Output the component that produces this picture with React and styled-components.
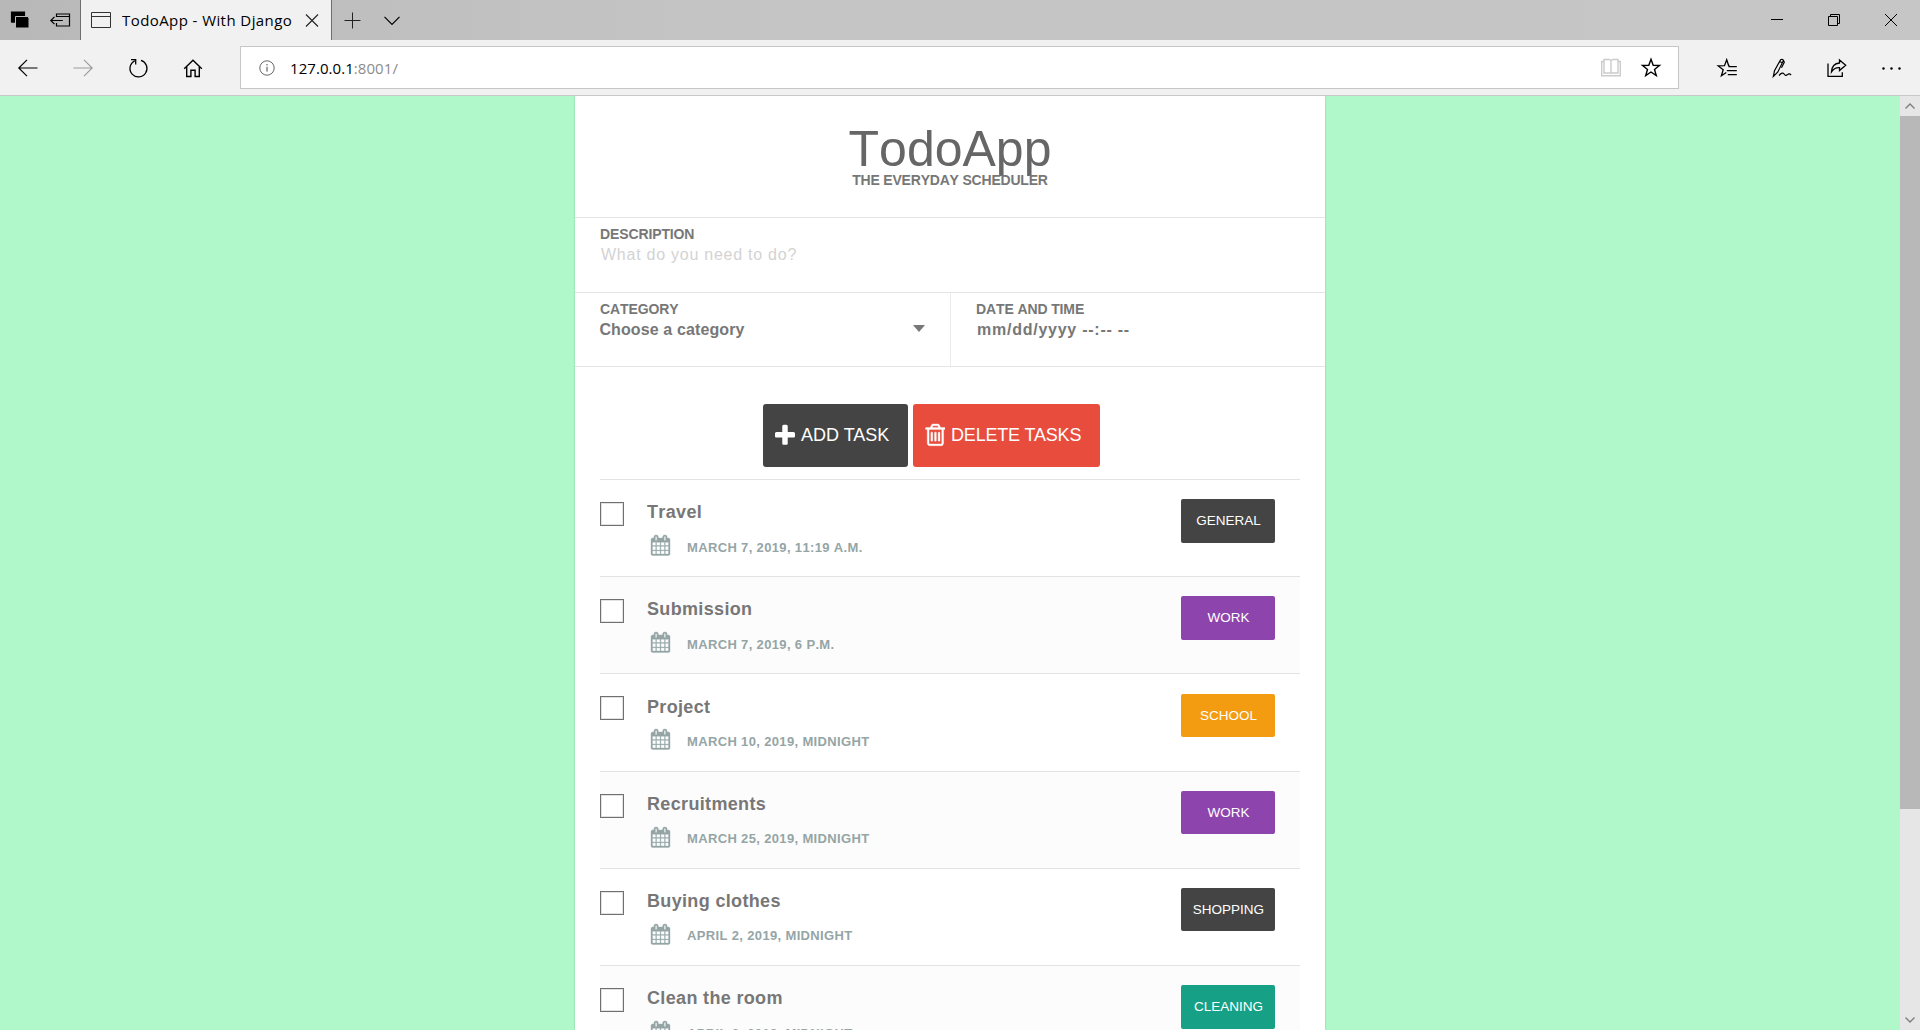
import React from 'react';
import styled, { createGlobalStyle } from 'styled-components';

const Global = createGlobalStyle`
  * { box-sizing: border-box; }
  body {
    margin: 0;
    overflow: hidden;
    font-family: 'Liberation Sans', Arial, sans-serif;
    font-kerning: none;
  }
  h1, h2, p, ul { margin: 0; padding: 0; }
`;

const Window = styled.div`
  width: 1920px;
  height: 1030px;
  display: flex;
  flex-direction: column;
  overflow: hidden;
  background: #f1f1f1;
  font-family: 'Liberation Sans', Arial, sans-serif;
`;

/* Browser chrome */
const TitleBar = styled.div`
  height: 40px;
  flex: none;
  display: flex;
  padding-right: 1px;
  background: linear-gradient(90deg, #b8b8b8 0, #c0c0c0 420px, #c5c5c5 800px, #c6c6c6 100%);
`;
const Cell = styled.div`
  width: ${(p) => p.$w}px;
  flex: none;
  display: flex;
  align-items: center;
  justify-content: center;
  color: ${(p) => p.$color || '#000'};
  svg { display: block; overflow: visible; }
`;
const Tab = styled.div`
  width: 252px;
  display: flex;
  align-items: center;
  background: #f1f1f1;
  border-left: 1px solid #6e6e6e;
  border-right: 1px solid #6e6e6e;
  padding-left: 10px;
  svg { display: block; flex: none; }
`;
const TabTitle = styled.div`
  width: 170px;
  margin: 0 13px 0 11px;
  overflow: hidden;
  white-space: nowrap;
  font: 15px/22px 'Open Sans', 'Noto Sans', sans-serif;
  letter-spacing: 0.42px;
  color: #000;
`;
const Spacer = styled.div`
  flex: 1;
`;
const Toolbar = styled.div`
  height: 56px;
  flex: none;
  display: flex;
  align-items: stretch;
  border-bottom: 1px solid #c8c8c8;
`;
const Address = styled.div`
  width: 1439px;
  height: 43px;
  margin: 6px 21px 0 20px;
  display: flex;
  align-items: center;
  background: #fff;
  border: 1px solid #c6c6c6;
  padding-left: 17.5px;
  svg { display: block; overflow: visible; }
`;
const Url = styled.div`
  flex: 1;
  margin-left: 15.5px;
  font: 15px/22px 'Open Sans', 'Noto Sans', sans-serif;
  letter-spacing: 0.06px;
  color: #000;
  span { color: #8c8c8c; }
`;

/* Page */
const Viewport = styled.div`
  flex: 1;
  min-height: 0;
  display: flex;
  background: #b0f7ca;
`;
const Page = styled.div`
  flex: 1;
  display: flex;
  justify-content: center;
  overflow: hidden;
`;
const Sheet = styled.main`
  width: 750px;
  height: 1300px;
  background: #fff;
  box-shadow: 0 0 2px rgba(0, 0, 0, 0.2);
`;
const Header = styled.header`
  height: 121px;
  padding-top: 28px;
  text-align: center;
  h1 {
    font-size: 50px;
    line-height: 50px;
    font-weight: 400;
    color: #666;
  }
  p {
    font-size: 14px;
    line-height: 12px;
    font-weight: 700;
    color: #777;
    letter-spacing: -0.2px;
  }
`;
const FormRow = styled.div`
  height: ${(p) => p.$h}px;
  display: grid;
  grid-auto-flow: column;
  grid-auto-columns: minmax(0, 1fr);
  border-top: 1px solid #e5e5e5;
`;
const Field = styled.label`
  display: flex;
  flex-direction: column;
  padding: 8px 25px 0;
  & + & { border-left: 1px solid #ececec; }
`;
const Label = styled.span`
  font-size: 14px;
  line-height: 16px;
  font-weight: 700;
  letter-spacing: -0.12px;
  color: #777;
`;
const Value = styled.span`
  display: flex;
  justify-content: space-between;
  font-size: 16px;
  line-height: 26px;
  font-weight: ${(p) => (p.$hint ? 400 : 700)};
  letter-spacing: ${(p) => (p.$wide ? 0.75 : 0.12)}px;
  padding-left: ${(p) => (p.$wide ? 1 : 0)}px;
  margin-left: ${(p) => (p.$wide ? 0 : -0.6)}px;
  color: ${(p) => (p.$hint ? '#d3d3d3' : '#777')};
`;
const Caret = styled.i`
  width: 0;
  height: 0;
  margin: 8px 0 0;
  border: 6px solid transparent;
  border-top: 7px solid #777;
  border-bottom: 0;
`;
const Actions = styled.div`
  height: 113px;
  border-top: 1px solid #e5e5e5;
  padding: 37px 0 0 188px;
  display: flex;
  gap: 5px;
`;
const Action = styled.button`
  width: ${(p) => p.$w}px;
  height: 63px;
  display: flex;
  align-items: center;
  gap: 6px;
  padding: 0 0 2px 12px;
  border: 0;
  border-radius: 3px;
  background: ${(p) => p.$bg};
  color: #fff;
  font: 18px/20px 'Liberation Sans', Arial, sans-serif;
  letter-spacing: ${(p) => p.$track || 0}px;
  white-space: nowrap;
  svg { flex: none; display: block; }
`;
const List = styled.ul`
  list-style: none;
  margin: 0 25px;
`;
const Item = styled.li`
  height: 97.2px;
  border-top: 1px solid #e3e3e3;
  display: flex;
  background: #fff;
  &:nth-child(even) { background: #fcfcfc; }
`;
const Check = styled.span`
  width: 24px;
  height: 24px;
  margin-top: 22px;
  border: 1px solid #707070;
  background: #fff;
  box-shadow: inset 0 0 0 1px #e2e2e2;
`;
const Info = styled.div`
  flex: 1;
  margin-left: 23px;
  padding-top: 22.2px;
`;
const Name = styled.h2`
  font-size: 18px;
  line-height: 20px;
  font-weight: 700;
  letter-spacing: 0.34px;
  color: #777;
`;
const When = styled.div`
  display: flex;
  align-items: center;
  margin: 11px 0 0 4px;
  height: 24px;
  color: #95a5a6;
  font-size: 13px;
  font-weight: 700;
  letter-spacing: 0.35px;
  svg { display: block; margin-right: 17px; overflow: visible; }
  span { padding-top: 4px; }
`;
const Badge = styled.div`
  width: 94px;
  height: 43.5px;
  margin: 19.2px 25px 0 0;
  padding-left: 1px;
  border-radius: 2px;
  background: ${(p) => p.$bg};
  color: #fff;
  font-size: 13.5px;
  line-height: 43px;
  text-align: center;
`;

/* Scrollbar */
const Scrollbar = styled.div`
  width: 20px;
  display: flex;
  flex-direction: column;
  background: #e6e6e6;
`;
const ScrollButton = styled.div`
  height: 20px;
  display: flex;
  align-items: center;
  justify-content: center;
  color: #7c7c7c;
`;
const Thumb = styled.div`
  height: 693px;
  background: #b8b8b8;
`;

const Icon = ({ w = 20, h = 20, sw = 1.2, children }) => (
  <svg width={w} height={h} viewBox={`0 0 ${w} ${h}`} fill="none" stroke="currentColor" strokeWidth={sw}>
    {children}
  </svg>
);

const CalendarIcon = () => (
  <svg width="19" height="20.5" viewBox="0 0 1664 1792" fill="currentColor" stroke="currentColor" strokeWidth="30">
    <path d="M128 1664h288v-288h-288v288zm352 0h320v-288h-320v288zm-352-352h288v-320h-288v320zm352 0h320v-320h-320v320zm-352-384h288v-288h-288v288zm736 736h320v-288h-320v288zm-384-736h320v-288h-320v288zm768 736h288v-288h-288v288zm-384-352h320v-320h-320v320zm-352-864v-288q0-13-9.5-22.5t-22.5-9.5h-64q-13 0-22.5 9.5t-9.5 22.5v288q0 13 9.5 22.5t22.5 9.5h64q13 0 22.5-9.5t9.5-22.5zm736 864h288v-320h-288v320zm-384-384h320v-288h-320v288zm384 0h288v-288h-288v288zm32-480v-288q0-13-9.5-22.5t-22.5-9.5h-64q-13 0-22.5 9.5t-9.5 22.5v288q0 13 9.5 22.5t22.5 9.5h64q13 0 22.5-9.5t9.5-22.5zm384-64v1280q0 52-38 90t-90 38h-1408q-52 0-90-38t-38-90v-1280q0-52 38-90t90-38h128v-96q0-66 47-113t113-47h64q66 0 113 47t47 113v96h384v-96q0-66 47-113t113-47h64q66 0 113 47t47 113v96h128q52 0 90 38t38 90z" />
  </svg>
);

const PlusIcon = () => (
  <svg width="20" height="24" viewBox="192 0 1408 1690" fill="currentColor">
    <path d="M1600 736v192q0 40-28 68t-68 28h-416v416q0 40-28 68t-68 28h-192q-40 0-68-28t-28-68v-416h-416q-40 0-68-28t-28-68v-192q0-40 28-68t68-28h416v-416q0-40 28-68t68-28h192q40 0 68 28t28 68v416h416q40 0 68 28t28 68z" />
  </svg>
);

const TrashIcon = () => (
  <svg width="20" height="24" viewBox="162 60 1408 1690" fill="currentColor" stroke="currentColor" strokeWidth="24">
    <path d="M704 736v576q0 14-9 23t-23 9h-64q-14 0-23-9t-9-23v-576q0-14 9-23t23-9h64q14 0 23 9t9 23zm256 0v576q0 14-9 23t-23 9h-64q-14 0-23-9t-9-23v-576q0-14 9-23t23-9h64q14 0 23 9t9 23zm256 0v576q0 14-9 23t-23 9h-64q-14 0-23-9t-9-23v-576q0-14 9-23t23-9h64q14 0 23 9t9 23zm128 724v-948h-896v948q0 22 7 40.5t14.5 27 10.5 8.5h832q3 0 10.5-8.5t14.5-27 7-40.5zm-672-1076h448l-48-117q-7-9-17-11h-317q-10 2-17 11zm928 32v64q0 14-9 23t-23 9h-96v948q0 83-47 143.5t-113 60.5h-832q-66 0-113-58.5t-47-141.5v-952h-96q-14 0-23-9t-9-23v-64q0-14 9-23t23-9h309l70-167q15-37 54-63t79-26h320q40 0 79 26t54 63l70 167h309q14 0 23 9t9 23z" />
  </svg>
);

const tasks = [
  { name: 'Travel', when: 'MARCH 7, 2019, 11:19 A.M.', tag: 'GENERAL', color: '#444444' },
  { name: 'Submission', when: 'MARCH 7, 2019, 6 P.M.', tag: 'WORK', color: '#8e44ad' },
  { name: 'Project', when: 'MARCH 10, 2019, MIDNIGHT', tag: 'SCHOOL', color: '#f39c12' },
  { name: 'Recruitments', when: 'MARCH 25, 2019, MIDNIGHT', tag: 'WORK', color: '#8e44ad' },
  { name: 'Buying clothes', when: 'APRIL 2, 2019, MIDNIGHT', tag: 'SHOPPING', color: '#444444' },
  { name: 'Clean the room', when: 'APRIL 6, 2019, MIDNIGHT', tag: 'CLEANING', color: '#16a085' },
];

const Chrome = () => (
  <>
    <TitleBar>
      <Cell $w={40}>
        <Icon>
          <path d="M1.5 2h13v3.5h-8v7h-5z" fill="currentColor" stroke="none" />
          <path d="M1.5 2h13v10h-13z" fill="currentColor" />
          <path d="M5.5 6.5h13v11h-13z" fill="currentColor" stroke="#b9b9b9" strokeWidth="1" />
          <path d="M6 8h12.500v9.500h-12.500z" fill="currentColor" stroke="none" />
        </Icon>
      </Cell>
      <Cell $w={40}>
        <Icon>
          <path d="M6.500 7V4h13v12h-13v-3M6.500 6.500h13M.800 10.500h12M4.500 6.800L.800 10.500l3.700 3.700" />
        </Icon>
      </Cell>
      <Tab>
        <Icon w={20} h={18}>
          <path d="M.5 1.500h19v15H.5zM.5 5.500h19" stroke="#333" strokeWidth="1" />
        </Icon>
        <TabTitle>TodoApp - With Django</TabTitle>
        <Icon w={14} h={14}>
          <path d="M1 1.500l12 12M13 1.500L1 13.500" stroke="#222" strokeWidth="1.100" />
        </Icon>
      </Tab>
      <Cell $w={42}>
        <Icon w={16} h={16} sw={1}><path d="M7.500 .5v16M-.5 8.500h16" stroke="#222" /></Icon>
      </Cell>
      <Cell $w={36}>
        <Icon w={16} h={8}><path d="M.5 .8L8 8.300l7.500-7.500" /></Icon>
      </Cell>
      <Spacer />
      <Cell $w={57}>
        <Icon w={12} h={12} sw={1}><path d="M0 5.500h12" /></Icon>
      </Cell>
      <Cell $w={57}>
        <Icon w={12} h={12} sw={1}><path d="M.5 2.500h9v9h-9zM2.500 2.500v-2h9v9h-2" /></Icon>
      </Cell>
      <Cell $w={57}>
        <Icon w={12} h={12} sw={1}><path d="M0 0l12 12M12 0L0 12" /></Icon>
      </Cell>
    </TitleBar>
    <Toolbar>
      <Cell $w={55}><Icon sw={1.2}><path d="M.800 10h18.700M9 1.800L.800 10 9 18.200" /></Icon></Cell>
      <Cell $w={55} $color="#9b9b9b"><Icon sw={1.1}><path d="M.5 10h18.700M11 1.800l8.200 8.200-8.200 8.200" /></Icon></Cell>
      <Cell $w={55}>
        <Icon sw={1.3}><path d="M13 2.300A8.500 8.500 0 1 1 6.700 2.800M3 1.600h4.700v5" /></Icon>
      </Cell>
      <Cell $w={55}>
        <Icon sw={1.4}><path d="M1.200 10.800L10 2.200l8.800 8.600M3.700 9v9.500h4.200v-6.300h4.200v6.300h4.200V9" /></Icon>
      </Cell>
      <Address>
        <Icon w={16} h={16} sw={1}>
          <circle cx="8" cy="8" r="7.200" stroke="#666" />
          <path d="M8 6.800v4.800M8 4v1.400" stroke="#444" />
        </Icon>
        <Url>127.0.0.1<span>:8001/</span></Url>
        <Cell $w={40} $color="#cbcbcb">
          <Icon sw={1.4}><path d="M10 2.500v13M3 1.500h5.500L10 2.700l1.500-1.200H17V15H3zM3 3.500H.7V17.800h18.600V3.500H17" /></Icon>
        </Cell>
        <Cell $w={40}>
          <Icon sw={1.4}><path d="M10 1.200l2.200 6.100 6.300.200-5 3.900 1.800 6.200-5.300-3.600-5.300 3.600 1.800-6.200-5-3.900 6.300-.200z" /></Icon>
        </Cell>
        <Cell $w={7} />
      </Address>
      <Cell $w={54.75}>
        <Icon sw={1.3}><path d="M12.500 7.500h-.9L9.700 1.800 7.500 7.700l-6.300.200 5 3.900-1.800 6 4.900-3.300M11.500 8.700h8.300M9.800 12.700h10M10.800 16.700h9" /></Icon>
      </Cell>
      <Cell $w={54.75}>
        <Icon sw={1.2}><path d="M1.300 18.500l1.200-5.700L8.600 1.700q1.600-1 2.900.700L5.700 14.200zM7.700 3.500l2.900 1.500M11.500 2.500l.8 1.700-2.800 5.500M7 17.500q3.500-4 5.100-1.500 1.400 2.200 3.200.800 1.800-1.800 3.800.200" /></Icon>
      </Cell>
      <Cell $w={54.75}>
        <Icon sw={1.3}><path d="M1 5.500v12.800h14.300v-4M12.500 2l6.200 5.200-6.200 5.300V9.600q-5-.400-8 4.200.500-8.100 8-8.800z" /></Icon>
      </Cell>
      <Cell $w={54.75}>
        <Icon><g fill="currentColor" stroke="none"><circle cx="1.500" cy="10.500" r="1.200" /><circle cx="9.500" cy="10.500" r="1.200" /><circle cx="17.500" cy="10.500" r="1.200" /></g></Icon>
      </Cell>
    </Toolbar>
  </>
);

export default function App() {
  return (
    <Window>
      <Global />
      <Chrome />
      <Viewport>
        <Page>
          <Sheet>
            <Header>
              <h1>TodoApp</h1>
              <p>THE EVERYDAY SCHEDULER</p>
            </Header>
            <FormRow $h={75}>
              <Field>
                <Label>DESCRIPTION</Label>
                <Value $hint $wide>What do you need to do?</Value>
              </Field>
            </FormRow>
            <FormRow $h={74}>
              <Field>
                <Label>CATEGORY</Label>
                <Value>Choose a category<Caret /></Value>
              </Field>
              <Field>
                <Label>DATE AND TIME</Label>
                <Value $wide>mm/dd/yyyy --:-- --</Value>
              </Field>
            </FormRow>
            <Actions>
              <Action $w={145} $bg="#444444"><PlusIcon />ADD TASK</Action>
              <Action $w={187} $bg="#e84c3d" $track={-0.18}><TrashIcon />DELETE TASKS</Action>
            </Actions>
            <List>
              {tasks.map((t) => (
                <Item key={t.name}>
                  <Check />
                  <Info>
                    <Name>{t.name}</Name>
                    <When><CalendarIcon /><span>{t.when}</span></When>
                  </Info>
                  <Badge $bg={t.color}>{t.tag}</Badge>
                </Item>
              ))}
            </List>
          </Sheet>
        </Page>
        <Scrollbar>
          <ScrollButton><Icon w={10} h={6} sw={1.3}><path d="M.5 5.500L5 1l4.500 4.500" /></Icon></ScrollButton>
          <Thumb />
          <Spacer />
          <ScrollButton><Icon w={10} h={6} sw={1.3}><path d="M.5 .5L5 5 9.500 .5" /></Icon></ScrollButton>
        </Scrollbar>
      </Viewport>
    </Window>
  );
}
